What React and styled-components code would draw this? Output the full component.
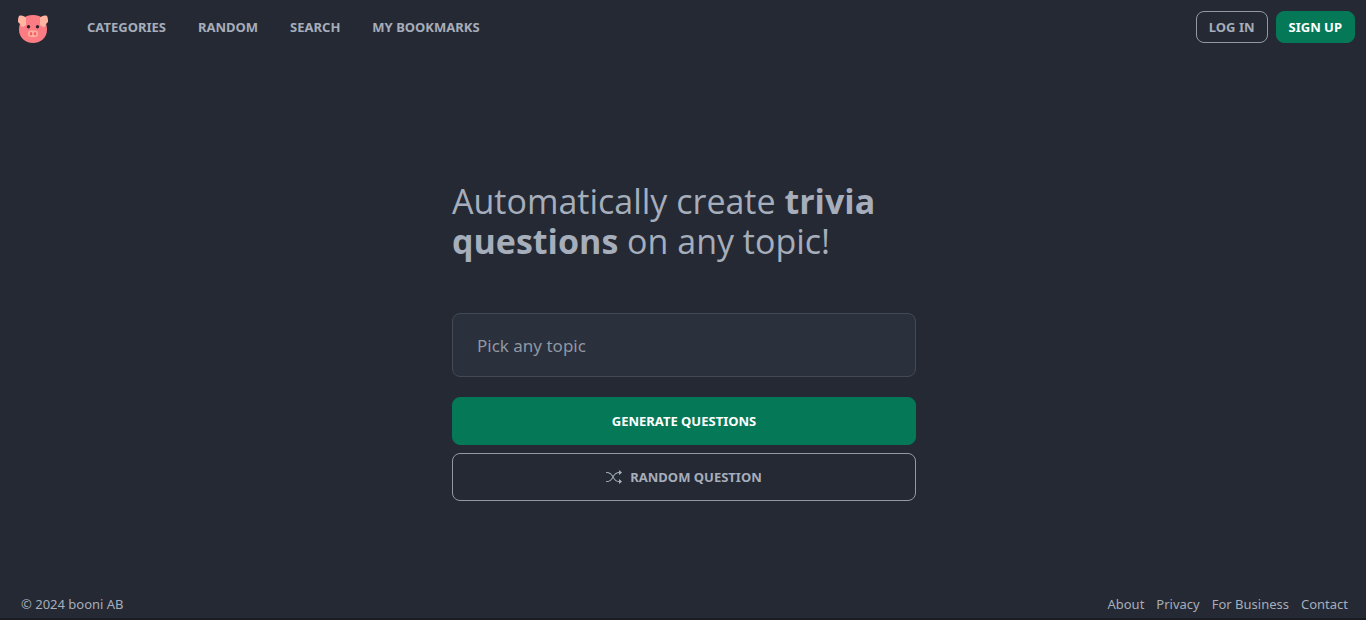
import React from "react";
import styled, { createGlobalStyle, css } from "styled-components";
import { BsShuffle } from "react-icons/bs";

const GlobalStyle = createGlobalStyle`
  *, *::before, *::after { box-sizing: border-box; }
  body {
    margin: 0;
    background: #242933;
    color: #a6adbb;
    font-family: "Noto Sans", "Open Sans", sans-serif;
    font-size: 14px;
    line-height: 20px;
  }
`;

const Page = styled.div`
  min-height: 100vh;
  display: flex;
  flex-direction: column;
  border-bottom: 2px solid #1b1c22;
`;

const Header = styled.header`
  display: flex;
  align-items: center;
  height: 56px;
  padding: 0 11px 2px 17px;
`;

const HomeLink = styled.a`
  display: flex;
  margin: 4px 38px 0 0;
`;

const Nav = styled.nav`
  display: flex;
  gap: 32px;
  flex: 1;
`;

const NavLink = styled.a`
  color: inherit;
  font-size: 13px;
  font-weight: 700;
  text-decoration: none;
  text-transform: uppercase;
`;

const Actions = styled.div`
  display: flex;
  gap: 8px;
`;

const Button = styled.button`
  display: flex;
  align-items: center;
  justify-content: center;
  gap: 8px;
  height: ${(p) => (p.$small ? 32 : 48)}px;
  padding: 0 12px;
  border: 1px solid #9299a6;
  border-radius: 8px;
  background: transparent;
  color: inherit;
  font: inherit;
  font-size: 13px;
  font-weight: 700;
  text-transform: uppercase;
  cursor: pointer;
  ${(p) =>
    p.$primary &&
    css`
      background: #047857;
      border-color: #047857;
      color: #ffffff;
    `}
`;

const Main = styled.main`
  flex: 1;
  display: flex;
  align-items: center;
  justify-content: center;
  padding: 32px 16px 0 18px;
`;

const Form = styled.form`
  display: flex;
  flex-direction: column;
  gap: 8px;
  width: 100%;
  max-width: 464px;
`;

const Title = styled.h1`
  margin: 0 0 44px;
  font-family: "Open Sans", "Noto Sans", sans-serif;
  font-size: 34px;
  line-height: 40px;
  font-weight: 400;
  strong { font-weight: 700; }
`;

const TopicInput = styled.input`
  width: 100%;
  height: 64px;
  margin-bottom: 12px;
  padding: 0 24px;
  border: 1px solid #434955;
  border-radius: 8px;
  background: #2a303c;
  color: inherit;
  font: inherit;
  font-size: 17px;
  &::placeholder {
    color: #9097a4;
    opacity: 1;
  }
`;

const Footer = styled.footer`
  display: flex;
  justify-content: space-between;
  padding: 0 18px 4px 21px;
  font-size: 13px;
`;

const FooterLinks = styled.nav`
  display: flex;
  gap: 12px;
`;

const FooterLink = styled.a`
  color: inherit;
  text-decoration: none;
`;

const PigLogo = () => (
  <svg width="32" height="30" viewBox="0 0 32 30" aria-hidden="true">
    <path d="M16 1 C25 1 30 7 30 15.5 C30 23.500 24 29 16 29 C8 29 2 23.500 2 15.500 C2 7 7 1 16 1Z" fill="#fc7c83" />
    <path d="M2 2 C4 1 8 2 9 4 V11 C8 12 6 13 4 13 C4 11 3 10 1 8 C1 6 1 4 2 2Z" fill="#ffb5a0" />
    <path d="M30 2 C28 1 24 2 23 4 V11 C24 12 26 13 28 13 C28 11 29 10 31 8 C31 6 31 4 30 2Z" fill="#ffb5a0" />
    <circle cx="11.5" cy="12.8" r="1.7" fill="#33232b" />
    <circle cx="20.5" cy="12.8" r="1.7" fill="#33232b" />
    <rect x="11" y="16.600" width="10" height="6.4" rx="3.2" fill="#ffb09e" />
    <ellipse cx="14" cy="19.800" rx="1.3" ry="1.8" fill="#ef6068" />
    <ellipse cx="18" cy="19.800" rx="1.3" ry="1.8" fill="#ef6068" />
  </svg>
);

const navItems = ["Categories", "Random", "Search", "My bookmarks"];
const footerItems = ["About", "Privacy", "For Business", "Contact"];

export default function App() {
  return (
    <>
      <GlobalStyle />
      <Page>
        <Header>
          <HomeLink href="#" aria-label="Home">
            <PigLogo />
          </HomeLink>
          <Nav>
            {navItems.map((item) => (
              <NavLink key={item} href="#">{item}</NavLink>
            ))}
          </Nav>
          <Actions>
            <Button type="button" $small>Log in</Button>
            <Button type="button" $small $primary>Sign up</Button>
          </Actions>
        </Header>
        <Main>
          <Form onSubmit={(e) => e.preventDefault()}>
            <Title>
              Automatically create <strong>trivia questions</strong> on any topic!
            </Title>
            <TopicInput type="text" placeholder="Pick any topic" aria-label="Pick any topic" />
            <Button type="submit" $primary>Generate questions</Button>
            <Button type="button">
              <BsShuffle size={16} aria-hidden="true" />
              Random question
            </Button>
          </Form>
        </Main>
        <Footer>
          <span>© 2024 booni AB</span>
          <FooterLinks>
            {footerItems.map((item) => (
              <FooterLink key={item} href="#">{item}</FooterLink>
            ))}
          </FooterLinks>
        </Footer>
      </Page>
    </>
  );
}
